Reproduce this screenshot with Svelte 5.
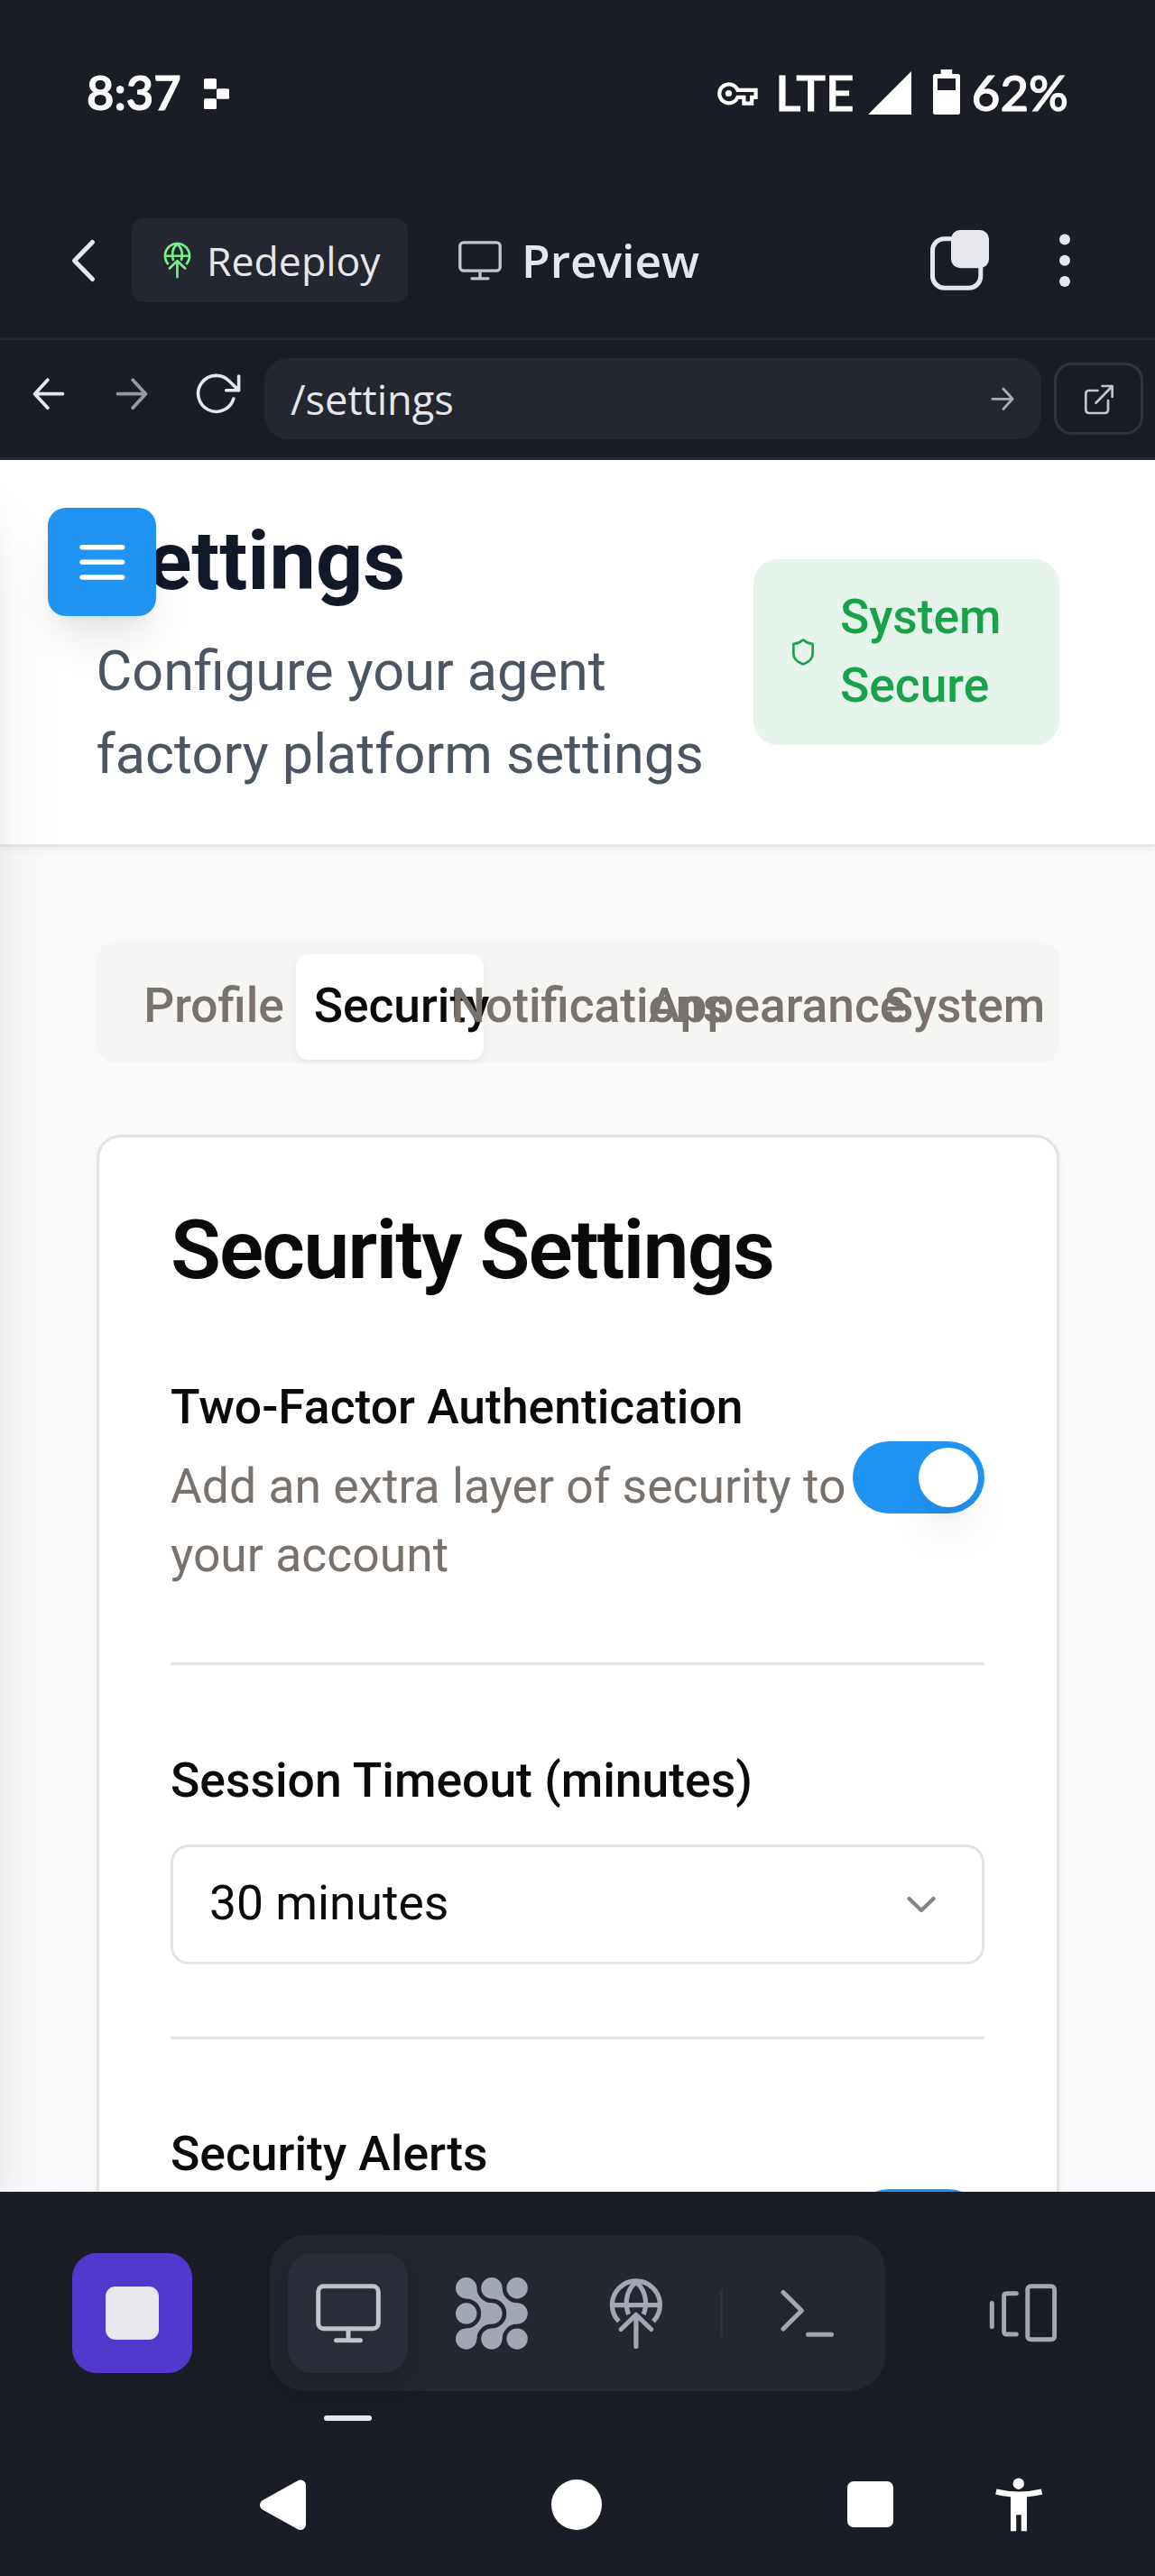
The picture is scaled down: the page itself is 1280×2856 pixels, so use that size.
<script>
  const tabs = ['Profile', 'Security', 'Notifications', 'Appearance', 'System'];
  let active = $state('Security');
  const cells = [13.7, 41.9, 70.1];
</script>

{#snippet monitor(cls)}
  <svg class={cls} viewBox="0 0 72 66" fill="none" stroke="currentColor" stroke-width="5" stroke-linecap="round">
    <rect x="2.7" y="2.8" width="66.6" height="47" rx="6" />
    <path d="M36 50v12M22.500 62.700h27" />
  </svg>
{/snippet}

{#snippet deploy(cls)}
  <svg class={cls} viewBox="0 0 60 80" fill="none" stroke="currentColor" stroke-width="5.200">
    <path d="M10.800 48.800A26.500 26.500 0 1 1 49 48.800" />
    <path d="M21.500 41C17 29 19 14 29.900 5C40.800 14 42.800 29 38.300 41M4 30.700h52" />
    <path d="M13.200 57.500L29.900 41.300L46.700 57.500M29.900 42v34.500" stroke-linecap="round" stroke-linejoin="round" />
  </svg>
{/snippet}

{#snippet arrow(cls)}
  <svg class={cls} viewBox="0 0 38 40" fill="none" stroke="currentColor" stroke-width="3.800" stroke-linecap="round" stroke-linejoin="round">
    <path d="M3.600 19.700h30.800M20.200 4.200L34.400 19.700L20.200 35.200" />
  </svg>
{/snippet}

<div class="screen">
  <div class="status">
    <span class="time">8:37</span>
    <svg class="notif" viewBox="0 0 28 34" fill="#fff">
      <rect width="14" height="11.800" rx="1.500" /><rect x="14" y="11.200" width="14" height="11.600" rx="1.500" /><rect y="22.200" width="14" height="11.800" rx="1.500" />
    </svg>
    <svg class="key" viewBox="0 0 50 30" fill="none" stroke="#fff" stroke-width="4.200">
      <path d="M24.500 10.900H44.600V18.800H40.200V25.600H31.400V18.800H24.500A10.500 10.500 0 1 1 24.500 10.900Z" />
      <circle cx="14.500" cy="14.500" r="3.600" fill="#fff" stroke="none" />
    </svg>
    <span class="net">LTE</span>
    <svg class="signal" viewBox="0 0 48 48" fill="#fff"><path d="M48 0V48H0Z" /></svg>
    <svg class="battery" viewBox="0 0 30 50" fill="#fff">
      <path fill-rule="evenodd" d="M8.700 0H21.200V5H27.500Q30 5 30 7.500V47.500Q30 50 27.500 50H2.500Q0 50 0 47.500V7.500Q0 5 2.500 5H8.700ZM5 10V23H25V10Z" />
    </svg>
    <span class="pct">62%</span>
  </div>

  <div class="toolbar">
    <svg class="back" viewBox="0 0 30 50" fill="none" stroke="#e6e7ec" stroke-width="5" stroke-linecap="round" stroke-linejoin="round"><path d="M24.500 4.500L4.500 25L24.500 45.500" /></svg>
    <button class="redeploy">{@render deploy('deploy-sm')}<span>Redeploy</span></button>
    {@render monitor('mon-sm')}
    <span class="preview">Preview</span>
    <svg class="copy" viewBox="0 0 70 70">
      <rect x="4.500" y="11.700" width="53.300" height="54.500" rx="13" fill="none" stroke="#e6e7ec" stroke-width="5" />
      <rect x="25" y="2" width="42" height="42.300" rx="10" fill="#e6e7ec" />
    </svg>
    <svg class="dots" viewBox="0 0 14 60" fill="#e6e7ec"><circle cx="7" cy="6.500" r="6" /><circle cx="7" cy="29.800" r="6" /><circle cx="7" cy="53" r="6" /></svg>
  </div>

  <div class="urlbar">
    {@render arrow('nav-back')}
    {@render arrow('nav-fwd')}
    <svg class="reload" viewBox="0 0 52 48" fill="none" stroke="#e6e7ec" stroke-width="3.600" stroke-linecap="round" stroke-linejoin="round">
      <path d="M42.800 30A20 20 0 1 1 38.300 10.800L48.600 20.800M48.600 5V20.800H34.700" />
    </svg>
    <div class="url"><span>/settings</span>{@render arrow('go')}</div>
    <button class="external" aria-label="Open in new tab">
      <svg viewBox="0 0 37 37" fill="none" stroke="#c3c5ce" stroke-width="2.700" stroke-linecap="round" stroke-linejoin="round">
        <path d="M17.500 9H8Q4.300 9 4.300 12.700V30.300Q4.300 34 8 34H25Q29 34 29 30.300V20M15.500 22.700L33.500 4.200M22.500 4H33.700V16" />
      </svg>
    </button>
  </div>

  <div class="page">
    <header>
      <div class="intro">
        <h1>Settings</h1>
        <p>Configure your agent factory platform settings</p>
      </div>
      <div class="badge">
        <svg viewBox="0 0 24 24" fill="none" stroke="currentColor" stroke-width="2" stroke-linecap="round" stroke-linejoin="round">
          <path d="M20 13c0 5-3.500 7.500-7.660 8.950a1 1 0 0 1-.670-.010C7.500 20.500 4 18 4 13V6a1 1 0 0 1 1-1c2 0 4.500-1.200 6.240-2.720a1.170 1.170 0 0 1 1.520 0C14.510 3.810 17 5 19 5a1 1 0 0 1 1 1z" />
        </svg>
        <span>System<br />Secure</span>
      </div>
    </header>

    <button class="menu" aria-label="Menu">
      <svg viewBox="0 0 24 24" fill="none" stroke="currentColor" stroke-width="2" stroke-linecap="round"><path d="M4 6h16M4 12h16M4 18h16" /></svg>
    </button>

    <main>
      <div class="tabs">
        {#each tabs as t}
          <button class="tab" class:on={active === t} onclick={() => (active = t)}>{t}</button>
        {/each}
      </div>

      <section class="card">
        <h2>Security Settings</h2>
        <div class="row">
          <div>
            <div class="label">Two-Factor Authentication</div>
            <p class="desc">Add an extra layer of security to your account</p>
          </div>
          <span class="switch"><i></i></span>
        </div>
        <hr />
        <div class="field">
          <div class="label">Session Timeout (minutes)</div>
          <div class="select">
            <span>30 minutes</span>
            <svg viewBox="0 0 32 20" fill="none" stroke="#858585" stroke-width="4.300" stroke-linecap="round" stroke-linejoin="round"><path d="M2.500 3L16 16L29.500 3" /></svg>
          </div>
        </div>
        <hr />
        <div class="row">
          <div class="label">Security Alerts</div>
          <span class="switch"><i></i></span>
        </div>
      </section>
    </main>
  </div>

  <div class="dock">
    <button class="stop" aria-label="Stop"><i></i></button>
    <div class="group">
      <span class="tile current">{@render monitor('mon-lg')}</span>
      <span class="tile">
        <svg class="mesh" viewBox="0 0 84 84" fill="currentColor">
          {#each cells as cy}{#each cells as cx}<circle {cx} {cy} r="11.700" />{/each}{/each}
          {#each [0, 28.2] as dx}
            <g transform="translate({dx} 0)">
              <path d="M25.400 13.700A16.500 16.500 0 0 0 41.900 30.200L44 42H30.200A16.500 16.500 0 0 0 13.700 25.400Z" />
              <path d="M25.400 70.100A16.500 16.500 0 0 1 41.900 53.600L44 41.800H30.200A16.500 16.500 0 0 1 13.700 58.400Z" />
            </g>
          {/each}
        </svg>
      </span>
      <span class="tile">{@render deploy('deploy-lg')}</span>
      <span class="sep"></span>
      <span class="tile">
        <svg class="term" viewBox="0 0 63 56" fill="none" stroke="currentColor" stroke-width="5" stroke-linecap="round" stroke-linejoin="round"><path d="M5 4.500L25.300 24.700L5 45M32.500 51.200H58.500" /></svg>
      </span>
    </div>
    <span class="tile layout">
      <svg class="phones" viewBox="0 0 80 69" fill="none" stroke="currentColor" stroke-width="5" stroke-linecap="round">
        <rect x="44.800" y="4.800" width="29.800" height="59" rx="3.500" />
        <path d="M32.300 12.800H21.500Q18.600 12.800 18.600 16V54.500Q18.600 58 21.500 58H32.300M5.300 23.500V49.500" />
      </svg>
    </span>
  </div>

  <div class="navbar">
    <svg class="n-back" viewBox="0 0 54 60" fill="#fff" stroke="#fff" stroke-width="12" stroke-linejoin="round"><path d="M47 8.500V52L8 30.300Z" /></svg>
    <i class="n-home"></i>
    <i class="n-recent"></i>
    <svg class="n-access" viewBox="0 0 57 63" fill="#fff">
      <circle cx="27.800" cy="8.700" r="6.200" />
      <path d="M3.500 14.500Q28.200 20.500 52.900 14.500L54.200 20.500Q46 22.600 37 23.300V61.300H30.800V43.300H25.200V61.300H19V23.300Q10 22.600 2.200 20.500Z" />
    </svg>
  </div>
</div>

<style>
  :global(body) { margin: 0; background: #1a1d25; }
  .screen { width: 1280px; height: 2856px; overflow: hidden; display: flex; flex-direction: column; background: #1a1d25; color: #e6e7ec; font-family: Roboto, sans-serif; box-sizing: border-box; }
  .screen :is(div, button, header, section, span) { box-sizing: border-box; }
  svg { display: block; flex: none; }
  button { border: 0; padding: 0; margin: 0; font: inherit; color: inherit; background: none; }
  h1, h2, p { margin: 0; }

  .status { height: 204px; display: flex; align-items: center; padding: 0 96px; font: 600 52.500px/64px Lato, sans-serif; color: #fff; -webkit-text-stroke: 1.200px #fff; flex: none; }
  .notif { width: 28px; height: 34px; margin: 4px auto 0 25px; }
  .key { width: 50px; height: 30px; margin: 4px 16px 0 0; }
  .net, .pct { font-weight: 500; font-size: 54.500px; }
  .net { letter-spacing: .3px; }
  .signal { width: 48px; height: 48px; margin: 1px 0 0 15px; }
  .battery { width: 30px; height: 50px; margin-left: 24px; }
  .pct { margin-left: 13px; }

  .toolbar { height: 170px; display: flex; align-items: center; flex: none; font-family: "Open Sans", sans-serif; }
  .back { width: 30px; height: 50px; margin-left: 78px; }
  .redeploy { width: 306px; height: 93px; margin: -1px 0 0 38px; border-radius: 13px; background: #24272f; display: flex; align-items: center; padding-left: 35px; gap: 17px; font-size: 44.600px; }
  .deploy-sm { width: 31px; height: 41px; color: #76f08a; }
  .mon-sm { width: 48px; height: 44px; margin-left: 56px; color: #c3c5ce; }
  .preview { margin: -2px 0 0 22px; font-size: 51.500px; font-weight: 600; }
  .copy { width: 70px; height: 70px; margin: -3px 0 0 auto; }
  .dots { width: 14px; height: 60px; margin: 0 93px 0 74px; }

  .urlbar { height: 136px; border-top: 3px solid #252731; border-bottom: 3px solid #252731; display: flex; align-items: center; flex: none; font-family: "Open Sans", sans-serif; }
  .nav-back { width: 38px; height: 40px; margin: -11px 0 0 35px; transform: scaleX(-1); }
  .nav-fwd { width: 38px; height: 40px; margin: -11px 0 0 54px; color: #9599a6; }
  .reload { width: 52px; height: 48px; margin: -12px 0 0 51px; }
  .url { width: 861px; height: 90px; margin-left: 25px; border-radius: 26px; background: #24272f; display: flex; align-items: center; justify-content: space-between; padding: 0 29px; font-size: 45.200px; }
  .go { width: 28px; height: 29px; color: #aaadb8; }
  .external { width: 99px; height: 80px; margin-left: 14px; border: 3px solid #30323d; border-radius: 20px; display: flex; align-items: center; justify-content: center; }
  .external svg { width: 37px; height: 37px; }

  .page { position: relative; height: 1920px; flex: none; overflow: hidden; background: #f8fafc; color: #0a0a09; }
  .page::after { content: ""; position: absolute; left: -853px; top: 0; width: 853px; height: 1920px; box-shadow: 0 67px 83px -17px rgba(0, 0, 0, .1), 0 27px 33px -20px rgba(0, 0, 0, .1); }
  header { height: 429px; padding: 53px 106px 0 106.500px; border-bottom: 3px solid #e3e5e8; background: #fff; display: flex; justify-content: space-between; align-items: flex-start; box-shadow: 0 3px 7px rgba(0, 0, 0, .06); }
  .intro { width: 690px; }
  h1 { font-size: 91.600px; line-height: 118px; font-weight: 700; color: #111827; }
  .intro p { margin-top: 17px; font-size: 61.200px; line-height: 92px; color: #4b5563; }
  .badge { width: 339px; height: 206px; margin-top: 57px; border-radius: 27px; background: #e7f4eb; color: #18a249; font-weight: 500; font-size: 53.300px; line-height: 76px; display: flex; align-items: center; padding-left: 39px; gap: 25px; }
  .badge svg { width: 32px; height: 32px; }
  .badge span { margin-top: -3px; }
  .menu { position: absolute; left: 53px; top: 53px; width: 120px; height: 120px; border-radius: 20px; background: #2094f3; color: #fff; display: flex; align-items: center; justify-content: center; box-shadow: 0 33px 50px -10px rgba(0, 0, 0, .1), 0 13px 20px -13px rgba(0, 0, 0, .1); }
  .menu svg { width: 66.700px; height: 66.700px; }

  main { padding: 106px 106px 0 106.500px; }
  .tabs { height: 133px; padding: 13px 14px 0 13px; border-radius: 20px; background: #f5f5f4; display: grid; grid-template-columns: repeat(5, 208px); }
  .tab { height: 117px; padding: 0 0 3px 27px; border-radius: 14px; display: flex; align-items: center; justify-content: center; white-space: nowrap; font-size: 53.300px; font-weight: 500; color: #79716b; }
  .tab.on { background: #fff; color: #0a0a09; box-shadow: 0 3px 7px rgba(0, 0, 0, .06); }

  .card { margin-top: 80px; padding: 80px 80px 80px 79.500px; height: 1700px; border: 3px solid #e5e4e3; border-radius: 27px; background: #fff; box-shadow: 0 3px 7px rgba(0, 0, 0, .05); }
  h2 { font-size: 91.500px; line-height: 90px; font-weight: 600; letter-spacing: -1.880px; margin-bottom: 81px; }
  .row { height: 251px; display: flex; align-items: center; justify-content: space-between; }
  .row > div { flex: none; width: 755px; }
  .row > .label { align-self: flex-start; }
  .label { padding-top: 9px; font-size: 53.450px; line-height: 76px; font-weight: 500; }
  .field .label { padding-top: 10px; }
  .desc { margin-top: 12px; font-size: 53.450px; line-height: 76px; color: #79716b; }
  .switch { flex: none; width: 146px; height: 80px; padding: 7px; border-radius: 40px; background: #2094f3; display: flex; justify-content: flex-end; align-items: center; }
  .switch i { width: 66px; height: 66px; border-radius: 50%; background: #fff; box-shadow: 0 33px 50px -10px rgba(0, 0, 0, .1), 0 13px 20px -13px rgba(0, 0, 0, .1); }
  hr { height: 3px; margin: 80px 0; border: 0; background: #e5e5e4; }
  .select { height: 133px; margin-top: 33px; padding: 0 51px 0 40px; border: 3px solid #e4e4e4; border-radius: 20px; display: flex; align-items: center; justify-content: space-between; font-size: 53.400px; line-height: 76px; }
  .select span { margin-top: -3px; }
  .select svg { width: 32px; height: 20px; }

  .dock { height: 270px; flex: none; display: flex; align-items: flex-start; padding: 48px 80px 0; background: #1a1d25; }
  .stop { width: 133px; height: 133px; margin: 20px 86px 0 0; border-radius: 27px; background: #5238cc; display: flex; align-items: center; justify-content: center; }
  .stop i { width: 59px; height: 59px; border-radius: 11px; background: #e6e7ec; }
  .group { width: 682px; height: 173px; padding: 0 20px; border-radius: 40px; background: #24272f; display: flex; align-items: center; justify-content: space-between; color: #a2a8b3; }
  .tile { position: relative; width: 133px; height: 133px; border-radius: 27px; display: flex; align-items: center; justify-content: center; }
  .current { background: #2a2c37; color: #c0c3cb; box-shadow: 0 10px 27px rgba(20, 18, 26, .35); }
  .current::after { content: ""; position: absolute; left: 40px; bottom: -53px; width: 53px; height: 6px; border-radius: 3px; background: #e6e7ec; }
  .mon-lg { width: 72px; height: 66px; }
  .mesh { width: 84px; height: 84px; }
  .deploy-lg { width: 60px; height: 80px; }
  .sep { width: 3px; height: 53px; background: #2f323d; }
  .term { width: 63px; height: 56px; }
  .layout { margin: 20px 0 0 auto; color: #a2a8b3; }
  .phones { width: 80px; height: 69px; }

  .navbar { height: 153px; flex: none; display: flex; align-items: center; }
  .n-back { width: 54px; height: 60px; margin-left: 286px; }
  .n-home { width: 56px; height: 56px; margin-left: 271px; border-radius: 50%; background: #fff; }
  .n-recent { width: 51px; height: 51px; margin-left: 272px; border-radius: 7px; background: #fff; }
  .n-access { width: 57px; height: 63px; margin-left: 111px; }
</style>
